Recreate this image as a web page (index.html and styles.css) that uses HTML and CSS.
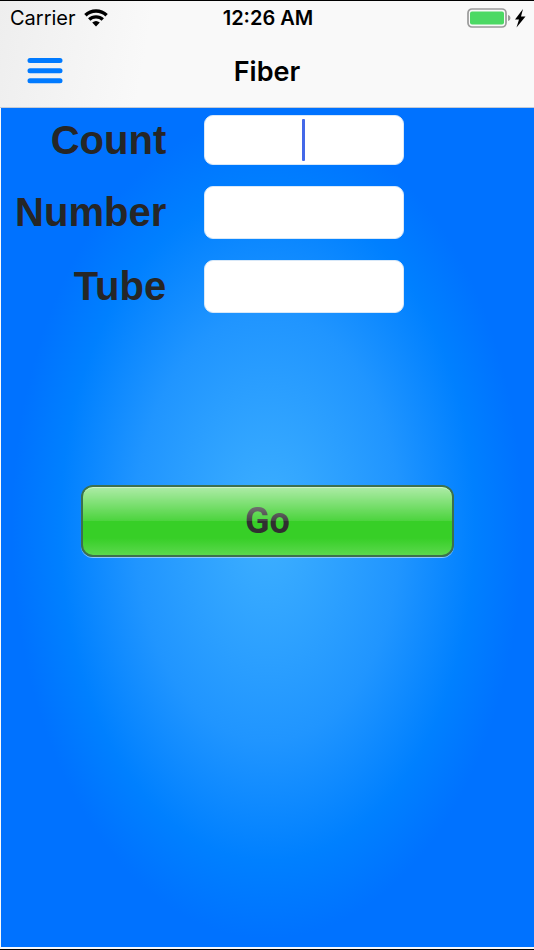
FILE: index.html
```html
<!DOCTYPE html>
<html lang="en">
  <head>
    <meta charset="UTF-8" />
    <meta name="viewport" content="width=device-width, initial-scale=1.0" />
    <title>Fiber</title>
    <link rel="stylesheet" href="styles.css">
  </head>
  <body>
    <header class="top">
      <div class="status">
        <div class="carrier">
          <span>Carrier</span>
          <svg width="24" height="18" viewBox="0 0 24 18" aria-hidden="true">
            <g fill="none" stroke="#000" stroke-width="3.4">
              <path d="M1.4 6.2C7.2 .6 16.8 .6 22.6 6.2" />
              <path d="M5.2 10.5C8.9 7 15.1 7 18.8 10.5" />
            </g>
            <path d="M8.2 13.6Q12 10.4 15.8 13.6L12 17.4Z" />
          </svg>
        </div>
        <span class="time">12:26 AM</span>
        <div class="power">
          <svg width="60" height="20" viewBox="0 0 60 20" aria-hidden="true">
            <rect x="2" y="1" width="38" height="18" rx="4" fill="none" stroke="#9b9b9b" stroke-width="1.7" />
            <rect x="4" y="3.5" width="34" height="13" rx="2" fill="#4cd964" />
            <path d="M42 7Q44.5 7.5 44.5 10T42 13Z" fill="#9b9b9b" />
            <path d="M57 1L49 11.5H53L50.5 19.5L59.5 8.5H55Z" />
          </svg>
        </div>
      </div>
      <nav class="navbar">
        <button class="menu" type="button" aria-label="Menu">
          <svg width="36" height="26" viewBox="0 0 36 26" aria-hidden="true">
            <g stroke="#007aff" stroke-width="5" stroke-linecap="round">
              <path d="M3 2.5H33M3 12.7H33M3 22.8H33" />
            </g>
          </svg>
        </button>
        <h1>Fiber</h1>
      </nav>
    </header>

    <form class="fiber-form">
      <div class="fields">
        <label for="count">Count</label>
        <div class="field active">
          <input type="text" id="count" inputmode="numeric" />
          <span class="caret"></span>
        </div>

        <label for="number">Number</label>
        <div class="field">
          <input type="text" id="number" inputmode="numeric" />
        </div>

        <label for="tube">Tube</label>
        <div class="field">
          <input type="text" id="tube" inputmode="numeric" />
        </div>
      </div>

      <button class="go" type="button">Go</button>
    </form>
  </body>
</html>
```

FILE: styles.css
```css
* {
  box-sizing: border-box;
}

body {
  margin: 0;
  min-height: 100vh;
  display: flex;
  flex-direction: column;
  border-top: 1px solid #000;
  border-bottom: 1px solid #000;
  background-color: #f9f9f9;
  color: #000;
  font-family: Inter, "Liberation Sans", sans-serif;
}

.top {
  background: linear-gradient(100deg, #eeeeee, #f9f9f9 28%);
  border-bottom: 1px solid #c4cbd6;
}

.status {
  display: grid;
  grid-template-columns: 1fr auto 1fr;
  align-items: center;
  height: 34px;
  padding: 0 8px 0 10px;
  font-size: 20px;
}

.carrier {
  display: flex;
  align-items: center;
  gap: 8px;
}

.time {
  font-weight: 600;
}

.power {
  display: flex;
  justify-content: flex-end;
}

.navbar {
  display: grid;
  grid-template-columns: 1fr auto 1fr;
  align-items: center;
  height: 72px;
  padding: 0 27px;
}

.menu {
  justify-self: start;
  display: flex;
  padding: 0;
  border: none;
  background: none;
  cursor: pointer;
}

h1 {
  margin: 0;
  font-size: 27px;
  font-weight: 600;
}

.fiber-form {
  flex: 1;
  margin: 0 0 2px 1px;
  padding-top: 7px;
  background: radial-gradient(ellipse 48% 49% at 50% 50%, #3eb0ff 0%, #2095ff 52%, #0080ff 81%, #0072ff 100%);
}

.fields {
  display: grid;
  grid-template-columns: 31% 38%;
  column-gap: 7%;
  row-gap: 21px;
  align-items: center;
}

label {
  justify-self: end;
  color: #262626;
  font: bold 40px "Liberation Sans", sans-serif;
}

.field {
  position: relative;
  max-width: 200px;
  height: 53px;
}

.field.active {
  height: 50px;
}

input {
  display: block;
  width: 100%;
  height: 100%;
  padding: 4px 10px;
  border: 1px solid #d8e8f8;
  border-radius: 9px;
  outline: none;
  background-color: #fff;
  caret-color: #4468e8;
  font: 34px "Liberation Sans", sans-serif;
  text-align: center;
}

.caret {
  position: absolute;
  top: 4px;
  bottom: 4px;
  left: 50%;
  width: 3px;
  margin-left: -2px;
  border-radius: 1px;
  background-color: #4468e8;
  pointer-events: none;
}

.go {
  position: relative;
  display: block;
  width: 70%;
  height: 72px;
  margin: 172px auto 0;
  padding: 0;
  border: 2px solid #3d704d;
  border-radius: 12px;
  background: linear-gradient(#37cf27 75%, #5bd84d);
  box-shadow: 0 1px 0 #8fc8ff;
  color: #303030;
  font: bold 36px Roboto, "Liberation Sans", sans-serif;
  cursor: pointer;
}

/* glossy top half, drawn over the text */
.go::after {
  content: "";
  position: absolute;
  inset: 0 0 50% 0;
  border-top: 1px solid #d0f4c8;
  border-radius: 10px 10px 0 0;
  background: linear-gradient(rgba(255, 255, 255, 0.58), rgba(255, 255, 255, 0.1));
}
```
